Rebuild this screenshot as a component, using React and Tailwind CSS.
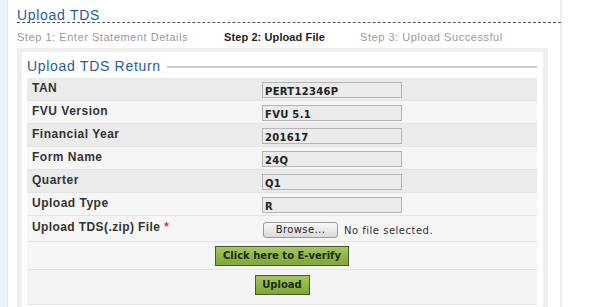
import React from "react";

const rows = [
  { label: "TAN", value: "PERT12346P", bg: "bg-[#ebebeb]" },
  { label: "FVU Version", value: "FVU 5.1", bg: "bg-[#f6f6f6]" },
  { label: "Financial Year", value: "201617", bg: "bg-[#ebebeb]" },
  { label: "Form Name", value: "24Q", bg: "bg-[#f6f6f6]" },
  { label: "Quarter", value: "Q1", bg: "bg-[#ebebeb]" },
  { label: "Upload Type", value: "R", bg: "bg-[#f6f6f6]" },
];

const arial = { fontFamily: '"Liberation Sans", Arial, sans-serif' };
const verdana = { fontFamily: '"DejaVu Sans", Verdana, sans-serif' };

export default function App() {
  return (
    <div className="w-[597px] h-[307px] flex bg-white overflow-hidden" style={arial}>
      <div className="w-[8px] shrink-0 bg-[#eef0f7] border-r border-[#e4e7f0]" />
      <div className="w-[554px] shrink-0 pl-[9px] border-r-2 border-[#ececf2]">
        <div className="w-[544px]">
          <div className="pt-[8px] h-[23px] border-b border-dashed border-[#555] text-[14px] leading-[14px] text-[#1f5d9c] tracking-[0.7px]">
            Upload TDS
          </div>
          <div className="flex h-[25px] items-center text-[11px] text-[#9a9a9a] pt-[3px] tracking-[0.55px]">
            <div className="w-[207px]">Step 1: Enter Statement Details</div>
            <div className="w-[136px] font-bold text-[#222] tracking-[0.1px]">Step 2: Upload File</div>
            <div>Step 3: Upload Successful</div>
          </div>
        </div>
        <div className="w-[531px] bg-[#efefef] pt-[4px] px-[5px] h-[300px]">
          <div className="bg-white h-full pl-[5px] pr-[6px]">
            <div className="flex items-center h-[26px] pt-[2px]">
              <span className="text-[14px] text-[#1f5d9c] tracking-[0.7px] pr-[6px]">
                Upload TDS Return
              </span>
              <div className="flex-1 h-[2px] bg-[#cccccc] mt-[2px]" />
            </div>
            {rows.map((r) => (
              <div
                key={r.label}
                className={`flex items-start h-[23px] pt-[4px] border-b border-[#e3e3e3] ${r.bg}`}
              >
                <div className="w-[235px] pl-[5px] text-[12px] leading-[13px] font-bold text-[#333] tracking-[0.5px]">
                  {r.label}
                </div>
                <div
                  className="w-[140px] h-[16px] border border-[#b5b5b5] bg-[#ebebeb] pl-[2px] text-[10px] leading-[15px] font-bold text-[#222] pt-[1px] tracking-[0.3px]"
                  style={verdana}
                >
                  {r.value}
                </div>
              </div>
            ))}
            <div className="flex items-start h-[26px] pt-[6px] border-b border-[#e3e3e3] bg-[#f6f6f6]">
              <div className="w-[236px] pl-[5px] text-[12px] leading-[13px] font-bold text-[#333] tracking-[0.4px] -mt-[1px]">
                Upload TDS(.zip) File <span className="text-[#e03a3a]">*</span>
              </div>
              <div className="flex items-center" style={verdana}>
                <div className="w-[75px] h-[16px] border border-[#9c9c9c] rounded-[3px] bg-gradient-to-b from-[#f8f8f8] to-[#dadada] text-[10px] leading-[14px] text-[#222] text-center tracking-[0.4px]">
                  Browse...
                </div>
                <span className="ml-[6px] text-[10px] text-[#333] tracking-[0.5px]">No file selected.</span>
              </div>
            </div>
            <div className="flex justify-center items-start h-[28px] pt-[4px] border-b border-[#e3e3e3] bg-[#f6f6f6]">
              <div
                className="w-[134px] h-[20px] border border-[#4b5732] bg-gradient-to-b from-[#a3c75a] to-[#7ea737] text-[10px] leading-[18px] font-bold text-[#1e2a0c] text-center"
                style={verdana}
              >
                Click here to E-verify
              </div>
            </div>
            <div className="flex justify-center items-start h-[35px] pt-[5px] border-b border-[#e3e3e3] bg-[#f4f4f4]">
              <div
                className="w-[55px] h-[20px] border border-[#4b5732] bg-gradient-to-b from-[#a3c75a] to-[#7ea737] text-[10px] leading-[18px] font-bold text-[#1e2a0c] text-center"
                style={verdana}
              >
                Upload
              </div>
            </div>
          </div>
        </div>
      </div>
      <div className="flex-1 bg-white" />
    </div>
  );
}
